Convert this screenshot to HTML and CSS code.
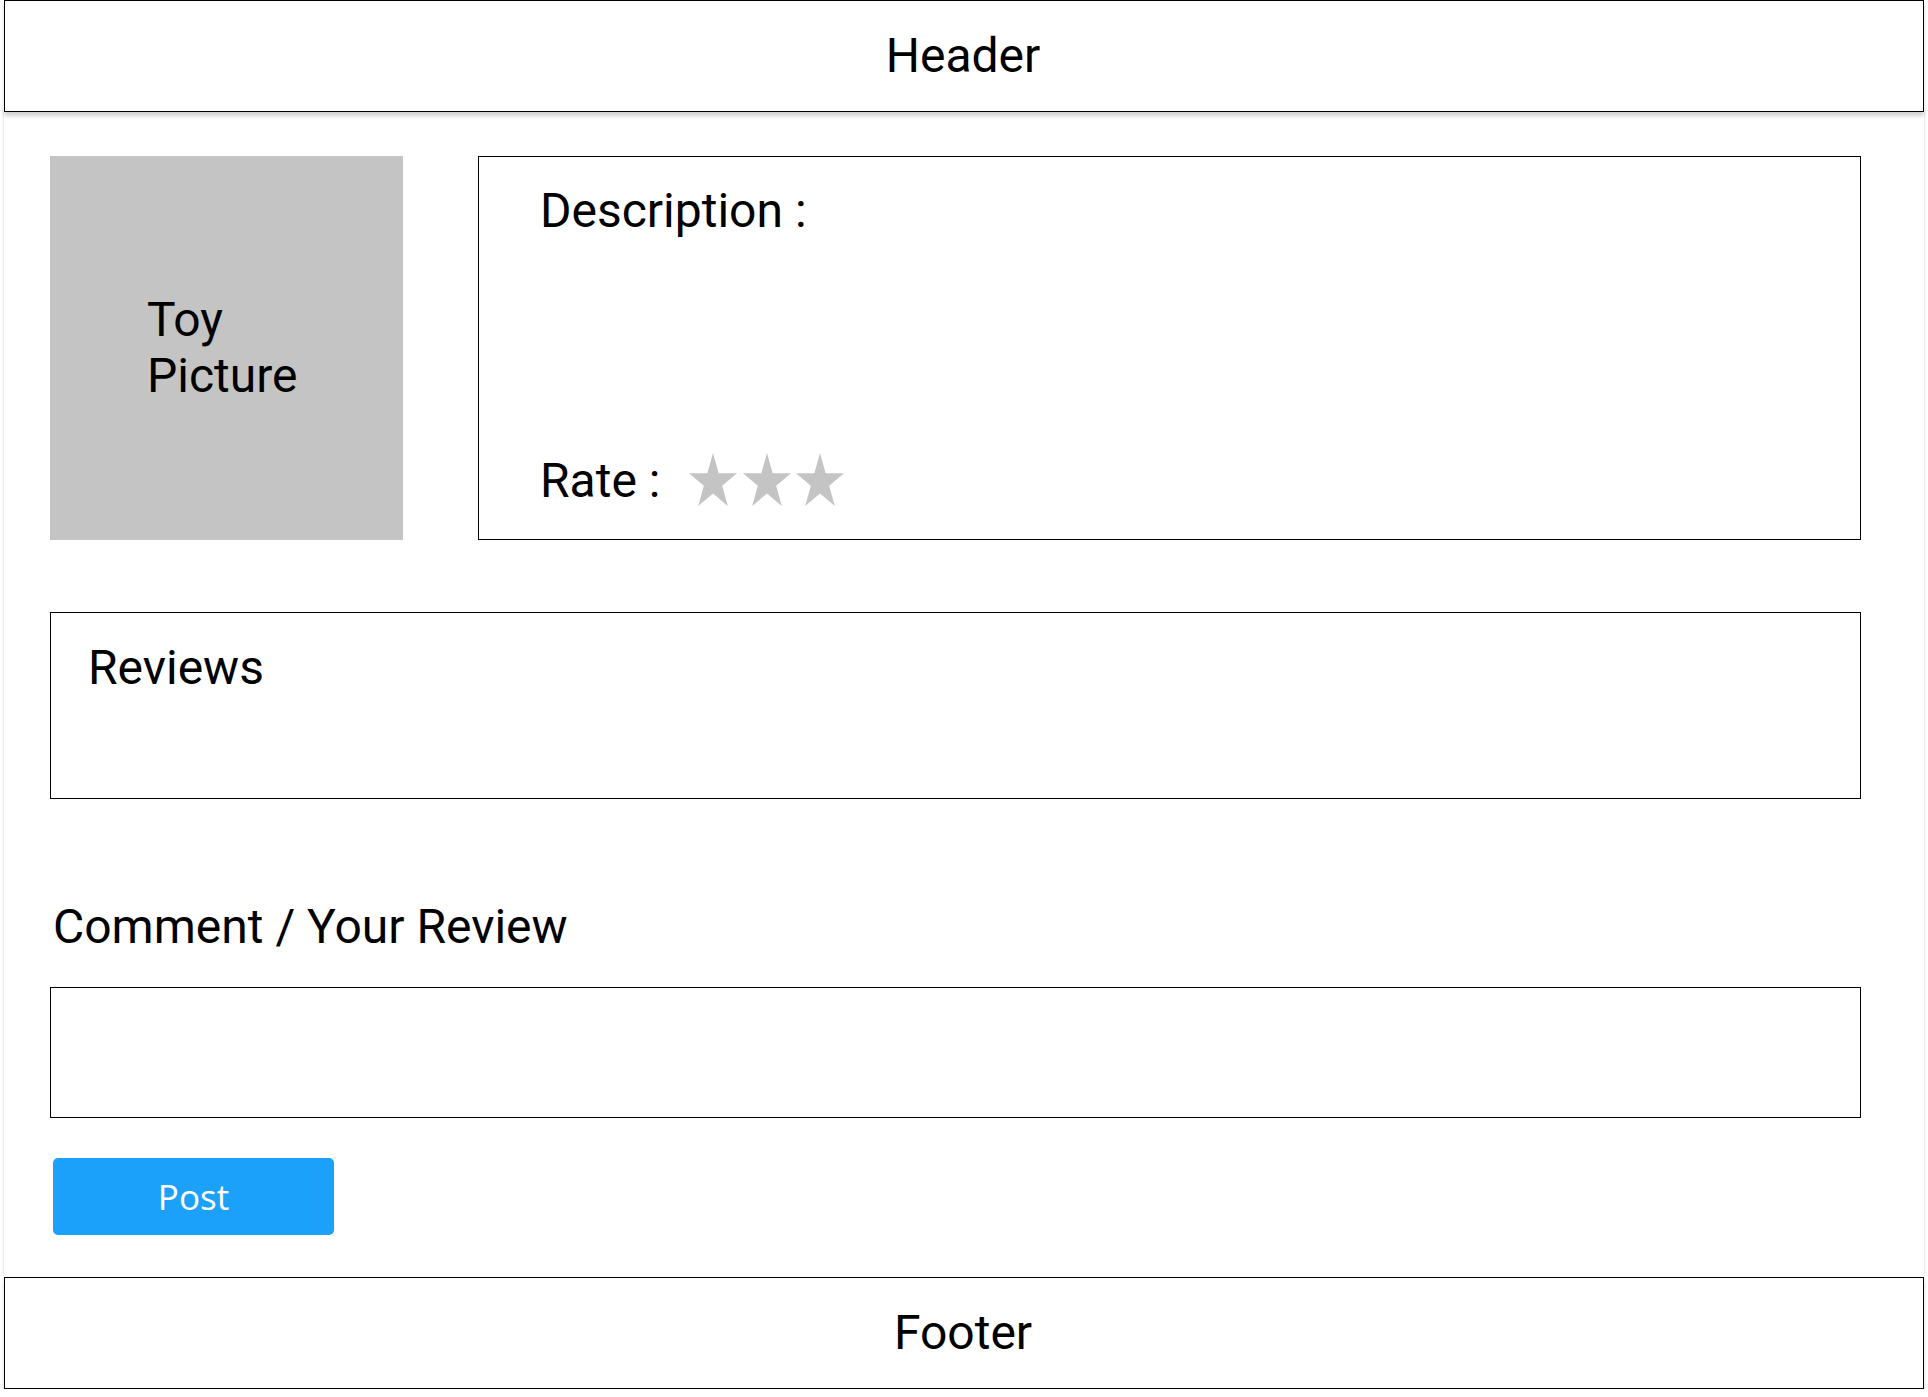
FILE: index.html
```html
<!DOCTYPE html>
<html lang="en">
<head>
<meta charset="utf-8">
<title>Toy Details</title>
<link rel="stylesheet" href="styles.css">
</head>
<body>
<div class="page">
  <header class="site-header">Header</header>
  <main class="content">
    <section class="top-row">
      <div class="toy-picture"><span class="toy-label">Toy<br>Picture</span></div>
      <div class="description">
        <div class="desc-title">Description :</div>
        <div class="rate-row">
          <span class="rate-label">Rate :</span>
          <span class="stars">
            <svg class="star" viewBox="0 0 48 53" width="48" height="53"><polygon points="24,0 29.67,20.2 48,20.2 33.16,32.8 38.8,53 24,40.5 9.2,53 14.84,32.8 0,20.2 18.33,20.2"/></svg>
            <svg class="star" viewBox="0 0 48 53" width="48" height="53"><polygon points="24,0 29.67,20.2 48,20.2 33.16,32.8 38.8,53 24,40.5 9.2,53 14.84,32.8 0,20.2 18.33,20.2"/></svg>
            <svg class="star" viewBox="0 0 48 53" width="48" height="53"><polygon points="24,0 29.67,20.2 48,20.2 33.16,32.8 38.8,53 24,40.5 9.2,53 14.84,32.8 0,20.2 18.33,20.2"/></svg>
          </span>
        </div>
      </div>
    </section>
    <section class="reviews">Reviews</section>
    <section class="comment">
      <label class="comment-label" for="review">Comment / Your Review</label>
      <div class="comment-box" id="review"></div>
      <button class="post-btn" type="button">Post</button>
    </section>
  </main>
  <footer class="site-footer">Footer</footer>
</div>
</body>
</html>
```
FILE: styles.css
```css
html, body {
  margin: 0;
  padding: 0;
  background: #ffffff;
}
body {
  font-family: Roboto, "Liberation Sans", Arial, sans-serif;
  color: #000;
  font-size: 48px;
}
.page {
  width: 1920px;
  margin-left: 4px;
  display: flex;
  flex-direction: column;
}
.site-header,
.site-footer {
  box-sizing: border-box;
  height: 112px;
  border: 1.3px solid #000;
  background: #fff;
  display: flex;
  align-items: center;
  justify-content: center;
  padding-right: 2px;
  font-size: 48px;
  line-height: 1.172;
  box-shadow: 0 4px 4px rgba(0, 0, 0, 0.18);
  position: relative;
  z-index: 2;
}
.content {
  box-sizing: border-box;
  height: 1165px;
  padding: 44px 63px 0 46px;
  background: #fff;
  box-shadow: 0 0 3px rgba(0, 0, 0, 0.18);
  display: flex;
  flex-direction: column;
  position: relative;
  z-index: 1;
}
.top-row {
  display: flex;
  height: 384px;
  gap: 75px;
}
.toy-picture {
  width: 353px;
  flex: none;
  background: #c4c4c4;
  display: flex;
  align-items: center;
  padding-left: 97px;
  box-sizing: border-box;
  line-height: 56px;
}
.toy-label {
  margin-top: -1px;
}
.description {
  flex: 1;
  box-sizing: border-box;
  border: 1px solid #000;
  padding: 26px 62px 30px 61px;
  display: flex;
  flex-direction: column;
  justify-content: space-between;
  line-height: 1.172;
}
.rate-row {
  display: flex;
  align-items: flex-start;
}
.rate-label {
  width: 149px;
}
.stars {
  display: flex;
  gap: 5.5px;
  padding-top: 0;
}
.star {
  display: block;
  fill: #c4c4c4;
}
.reviews {
  margin-top: 72px;
  height: 187px;
  box-sizing: border-box;
  border: 1px solid #000;
  padding: 27px 0 0 37px;
  line-height: 1.172;
}
.comment {
  display: flex;
  flex-direction: column;
  align-items: flex-start;
}
.comment-label {
  margin-top: 100px;
  margin-left: 3px;
  line-height: 1.172;
}
.comment-box {
  margin-top: 32px;
  align-self: stretch;
  height: 131px;
  box-sizing: border-box;
  border: 1px solid #000;
}
.post-btn {
  margin-top: 40px;
  margin-left: 3px;
  width: 281px;
  height: 77px;
  border: none;
  border-radius: 5px;
  background: #1ca1fb;
  color: #fff;
  font-family: "Open Sans", Lato, sans-serif;
  font-size: 35px;
  font-weight: 400;
  padding: 0;
  display: flex;
  align-items: center;
  justify-content: center;
}
```
